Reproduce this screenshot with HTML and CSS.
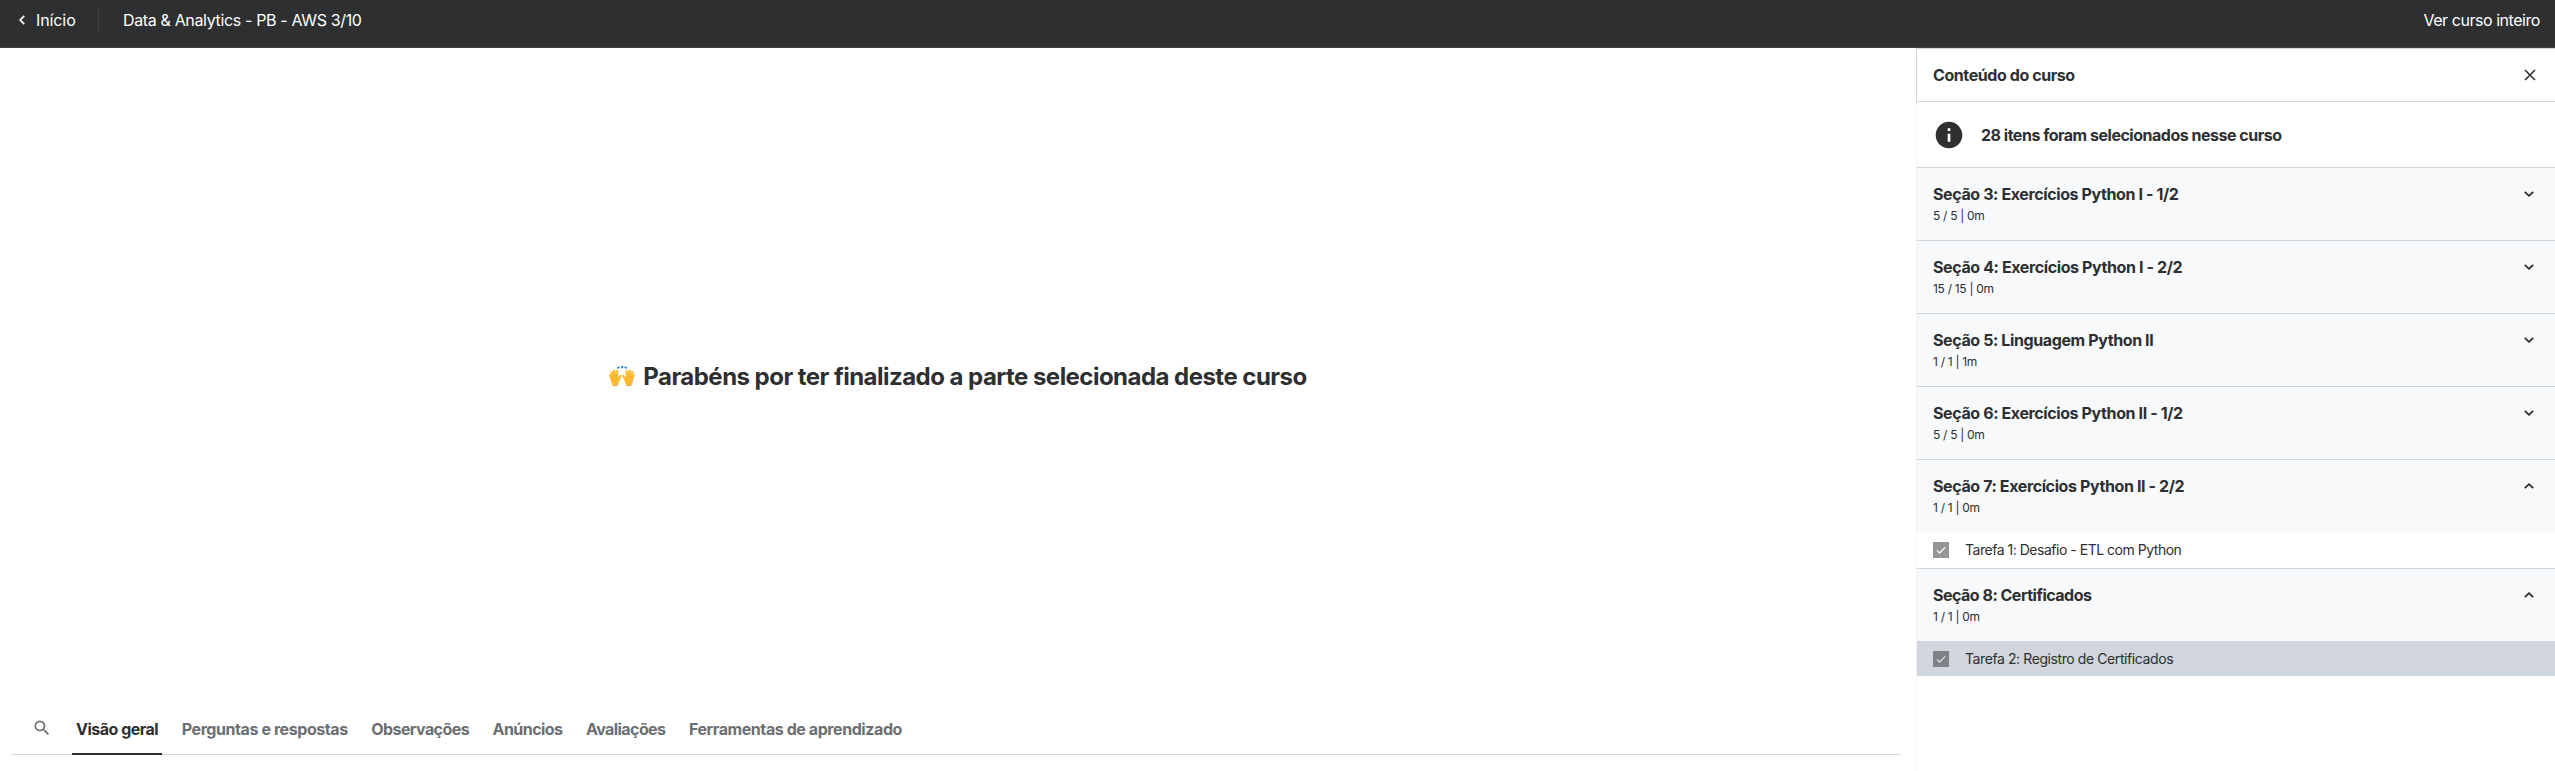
FILE: index.html
```html
<!DOCTYPE html>
<html lang="pt-BR">
<head>
<meta charset="utf-8">
<title>Data &amp; Analytics - PB - AWS 3/10</title>
<link rel="stylesheet" href="styles.css">
</head>
<body>
<svg class="sprite" aria-hidden="true">
  <symbol id="down" viewBox="0 0 10 6"><path d="M.8.8 5 4.8 9.2.8"/></symbol>
  <symbol id="up" viewBox="0 0 10 6"><path d="M.8 5.2 5 1.2 9.2 5.2"/></symbol>
  <symbol id="tick" viewBox="0 0 16 16"><path d="M4 8.4 6.6 11 12.2 5.4"/></symbol>
</svg>
<header class="topbar">
  <a class="back"><svg class="back-icon" viewBox="0 0 6 10"><path d="M5.2.8 1.2 5 5.2 9.2"/></svg><span class="back-label">Início</span></a>
  <span class="divider"></span>
  <h1 class="course-title">Data &amp; Analytics - PB - AWS 3/10</h1>
  <a class="full-course">Ver curso inteiro</a>
</header>
<div class="layout">
  <main class="content">
    <section class="finished">
      <svg class="hands" viewBox="0 0 26 20">
        <path class="spark" d="M8 1.200 L10.200 0.300 L10.600 2 L8.600 2.900 Z M12 0 H14.400 L14 2.300 H12.400 Z M15.800 0.300 L18 1.200 L17.400 2.900 L15.400 2 Z"/>
        <g id="hand">
          <path class="finger" d="M1.300 9.500 L3.500 14 M2.600 6.400 L4.600 12 M5.100 4.700 L6 11 M8.200 5.200 L7.800 11 M11.500 10 L9 15"/>
          <path class="palm" d="M1.800 12 C2.800 9.500 9.500 9 10 12 C10.300 15 9.800 18 8.600 19.500 C7 20.100 5 20.100 3.600 19.500 C2.800 17.500 1.600 15 1.800 12 Z"/>
          <path class="crease" d="M2.500 9.500 L3.400 11.800 M4.500 8 L5.100 11 M6.800 8 L6.900 10.800"/>
          <path class="wrist" d="M3.700 19.300 C5 19.900 7 19.900 8.500 19.300"/>
        </g>
        <use href="#hand" transform="translate(26 0) scale(-1 1)"/>
      </svg>
      <h2 class="finished-text">Parabéns por ter finalizado a parte selecionada deste curso</h2>
    </section>
    <nav class="tabs">
      <svg class="search" viewBox="0 0 24 24"><path d="M15.5 14h-.79l-.28-.27A6.471 6.471 0 0 0 16 9.500 6.500 6.500 0 1 0 9.500 16c1.610 0 3.090-.59 4.230-1.570l.27.28v.79l5 4.990L20.490 19l-4.990-5zm-6 0C7.010 14 5 11.990 5 9.500S7.010 5 9.500 5 14 7.010 14 9.500 11.990 14 9.500 14z"/></svg>
      <a class="tab tab-overview active">Visão geral</a>
      <a class="tab tab-questions">Perguntas e respostas</a>
      <a class="tab tab-notes">Observações</a>
      <a class="tab tab-news">Anúncios</a>
      <a class="tab tab-reviews">Avaliações</a>
      <a class="tab tab-tools">Ferramentas de aprendizado</a>
    </nav>
  </main>
  <aside class="sidebar">
    <div class="side-head">
      <h2 class="side-title">Conteúdo do curso</h2>
      <svg class="close" viewBox="0 0 12 12"><path d="M1 1 11 11M11 1 1 11"/></svg>
    </div>
    <div class="notice">
      <svg class="info" viewBox="0 0 24 24"><path d="M12 2C6.480 2 2 6.480 2 12s4.480 10 10 10 10-4.480 10-10S17.520 2 12 2zm1 15h-2v-6h2v6zm0-8h-2V7h2v2z"/></svg>
      <span class="notice-text">28 itens foram selecionados nesse curso</span>
    </div>
    <div class="section">
      <div><h3 class="section-title">Seção 3: Exercícios Python I - 1/2</h3><p class="meta">5 / 5 | 0m</p></div>
      <svg class="chevron"><use href="#down"/></svg>
    </div>
    <div class="section">
      <div><h3 class="section-title">Seção 4: Exercícios Python I - 2/2</h3><p class="meta">15 / 15 | 0m</p></div>
      <svg class="chevron"><use href="#down"/></svg>
    </div>
    <div class="section">
      <div><h3 class="section-title">Seção 5: Linguagem Python II</h3><p class="meta">1 / 1 | 1m</p></div>
      <svg class="chevron"><use href="#down"/></svg>
    </div>
    <div class="section">
      <div><h3 class="section-title">Seção 6: Exercícios Python II - 1/2</h3><p class="meta">5 / 5 | 0m</p></div>
      <svg class="chevron"><use href="#down"/></svg>
    </div>
    <div class="section">
      <div><h3 class="section-title">Seção 7: Exercícios Python II - 2/2</h3><p class="meta">1 / 1 | 0m</p></div>
      <svg class="chevron"><use href="#up"/></svg>
    </div>
    <div class="item">
      <svg class="check"><use href="#tick"/></svg>
      <span class="task task-challenge">Tarefa 1: Desafio - ETL com Python</span>
    </div>
    <div class="section">
      <div><h3 class="section-title section-title-tight">Seção 8: Certificados</h3><p class="meta">1 / 1 | 0m</p></div>
      <svg class="chevron"><use href="#up"/></svg>
    </div>
    <div class="item current">
      <svg class="check"><use href="#tick"/></svg>
      <span class="task">Tarefa 2: Registro de Certificados</span>
    </div>
  </aside>
</div>
</body>
</html>
```
FILE: styles.css
```css
* { box-sizing: border-box; }
body {
  margin: 0;
  height: 100vh;
  display: flex;
  flex-direction: column;
  overflow: hidden;
  background: #fff;
  color: #2d2f31;
  font: 16px/22px Inter, "Liberation Sans", sans-serif;
}
h1, h2, h3, p { margin: 0; }
svg { display: block; flex: none; }
.sprite { display: none; }

.topbar {
  flex: none;
  height: 48px;
  display: flex;
  align-items: center;
  padding: 0 15px 7px 19px;
  background: #2d2f31;
  border-bottom: 1px solid #3e4143;
  color: #fff;
}
.back { display: flex; align-items: center; gap: 11px; width: 79px; }
.back-label { letter-spacing: -0.1px; }
.back-icon { width: 6px; height: 10px; fill: none; stroke: #fff; stroke-width: 1.8; }
.divider { width: 1px; height: 22px; background: #3e4143; }
.course-title { margin-left: 24px; font-size: 16px; font-weight: 400; letter-spacing: -0.35px; }
.full-course { margin-left: auto; letter-spacing: -0.45px; }

.layout { flex: 1; display: flex; min-height: 0; }
.content { flex: 1; display: flex; flex-direction: column; padding: 0 16px 16px 12px; }
.finished {
  flex: 1;
  display: flex;
  align-items: center;
  justify-content: center;
  gap: 8px;
  padding: 0 0 1px 4px;
}
.hands { width: 26px; height: 20px; margin-top: -2px; overflow: visible; }
.spark { fill: #2a7de1; }
.palm { fill: #fdb92e; }
.finger { fill: none; stroke: #fdc03a; stroke-width: 2.6; stroke-linecap: round; }
.crease { fill: none; stroke: #e8a022; stroke-width: .5; }
.wrist { fill: none; stroke: #ef9a3c; stroke-width: .9; }
.finished-text { font-size: 24px; line-height: 30px; font-weight: 700; letter-spacing: -0.53px; }

.tabs {
  flex: none;
  height: 49px;
  display: flex;
  align-items: stretch;
  gap: 15.5px;
  padding-left: 20px;
  border-bottom: 1px solid #d1d7dc;
}
.search { width: 20px; height: 20px; margin: 12px 4.5px 0 0; fill: #6a6f73; }
.tab {
  padding: 12px 4px 0;
  margin-bottom: -1px;
  border-bottom: 2px solid transparent;
  color: #6a6f73;
  font-weight: 700;
  letter-spacing: -0.42px;
  white-space: nowrap;
}
.active { color: #2d2f31; border-color: #2d2f31; }
.tab-overview { letter-spacing: -0.5px; }
.tab-notes { letter-spacing: -0.58px; }
.tab-news { letter-spacing: -0.55px; }
.tab-reviews { letter-spacing: -0.58px; }

.sidebar { flex: none; width: 639px; border-left: 1px solid #f3f4f7; }
.side-head {
  height: 54px;
  margin-left: -1px;
  display: flex;
  align-items: center;
  justify-content: space-between;
  padding: 0 19px 0 16px;
  border: 1px solid #d1d5de;
  border-right: 0;
}
.side-title { font-size: 16px; font-weight: 700; letter-spacing: -0.42px; }
.close { width: 12px; height: 12px; stroke: #2d2f31; stroke-width: 1.6; }
.notice { height: 65px; display: flex; align-items: center; gap: 16px; padding-left: 16px; font-weight: 700; }
.info { width: 32px; height: 32px; fill: #2d2f31; }
.notice-text { letter-spacing: -0.49px; }
.section {
  height: 73px;
  display: flex;
  align-items: flex-start;
  justify-content: space-between;
  padding: 15px 21px 0 16px;
  background: #f7f9fb;
  border-top: 1px solid #d1d5de;
}
.section-title { font-size: 16px; font-weight: 700; letter-spacing: -0.39px; }
.section-title-tight { letter-spacing: -0.5px; }
.meta { margin-top: 2px; font-size: 12px; line-height: 17px; letter-spacing: -0.3px; }
.chevron { width: 10px; height: 6px; margin-top: 8px; fill: none; stroke: #2d2f31; stroke-width: 1.8; }
.item { height: 36px; display: flex; align-items: center; gap: 16px; padding-left: 16px; }
.current { height: 35px; background: #d1d5dd; }
.check { width: 16px; height: 16px; background: #939597; fill: none; stroke: #fff; stroke-width: 1.3; }
.current .check { background: #7e8284; stroke: #dcdfe3; }
.task { font-size: 14px; line-height: 20px; letter-spacing: -0.41px; }
.task-challenge { letter-spacing: -0.48px; }
```
